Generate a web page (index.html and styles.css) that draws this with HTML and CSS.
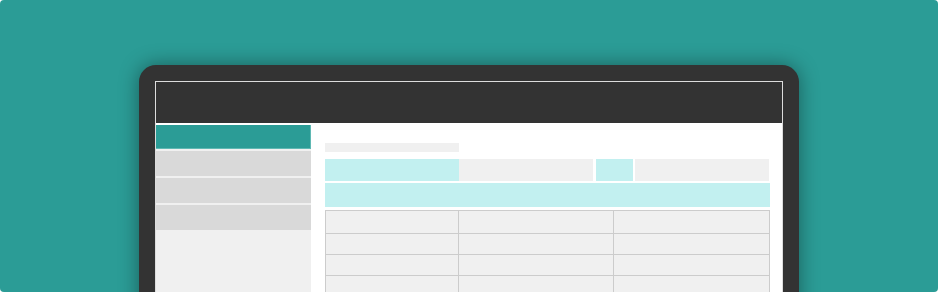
FILE: index.html
```html
<!DOCTYPE html>
<html>
  <head>
<link rel="stylesheet" href="styles.css">
</head>
<body>

<div class="stage">
  <div class="device">
    <div class="screen">
      <div class="screen-top"></div>
      <div class="screen-body">
        <div class="side">
          <div class="side-item active"></div>
          <div class="side-item"></div>
          <div class="side-item"></div>
          <div class="side-item"></div>
        </div>
        <div class="content">
          <div class="title-bar"></div>
          <div class="field-row">
            <div class="box cyan w134"></div>
            <div class="box w134"></div>
            <div class="box cyan w37 gap3"></div>
            <div class="box w134 gap2"></div>
          </div>
          <div class="banner"></div>
          <table class="grid">
            <tr><td class="c1"></td><td class="c2"></td><td></td></tr>
            <tr><td></td><td></td><td></td></tr>
            <tr><td></td><td></td><td></td></tr>
            <tr><td></td><td></td><td></td></tr>
          </table>
        </div>
      </div>
    </div>
  </div>
</div>

</body>
</html>
```

FILE: styles.css
```css
body {
  margin: 0;
  background-color: #fff;
}

.stage {
  background-color: #2b9c96;
  border-radius: 4px;
  height: 292px;
  padding-top: 65px;
  box-sizing: border-box;
  overflow: hidden;
  display: flex;
  justify-content: center;
}

.device {
  width: 660px;
  height: 300px;
  box-sizing: border-box;
  background-color: #333;
  border-radius: 17px 17px 0 0;
  padding: 16px 16px 0 16px;
  box-shadow: 0 0 20px rgba(0, 0, 0, 0.4);
}

.screen {
  border: 1px solid #ddd;
  border-bottom: none;
  background-color: #fff;
  height: 260px;
}

.screen-top {
  height: 41px;
  background-color: #333;
  border-bottom: 2px solid #fff;
}

.screen-body {
  display: flex;
  height: 200px;
}

.side {
  width: 155px;
  background-color: #f0f0f0;
  display: flex;
  flex-direction: column;
  gap: 2px;
}

.side-item {
  height: 25px;
  background-color: #d9d9d9;
}

.side-item.active {
  height: 23px;
  background-color: #2b9c96;
  border-right: 1px solid #5fb8b3;
  border-bottom: 1px solid #5fb8b3;
}

.content {
  flex: 1;
  padding: 18px 12px 0 14px;
}

.title-bar {
  width: 134px;
  height: 9px;
  background-color: #f0f0f0;
}

.field-row {
  display: flex;
  margin-top: 7px;
  height: 22px;
}

.box {
  background-color: #f0f0f0;
}

.box.cyan {
  background-color: #c2f0f0;
}

.w134 { width: 134px; }
.w37 { width: 37px; }
.gap2 { margin-left: 2px; }
.gap3 { margin-left: 3px; }

.banner {
  margin-top: 2px;
  height: 24px;
  background-color: #c2f0f0;
}

.grid {
  margin-top: 3px;
  width: 445px;
  border-collapse: collapse;
}

.grid td {
  border: 1px solid #ccc;
  background-color: #f0f0f0;
  height: 20px;
  padding: 0;
}

.grid tr:first-child td {
  height: 22px;
}

.grid .c1 { width: 132px; }
.grid .c2 { width: 154px; }
```
